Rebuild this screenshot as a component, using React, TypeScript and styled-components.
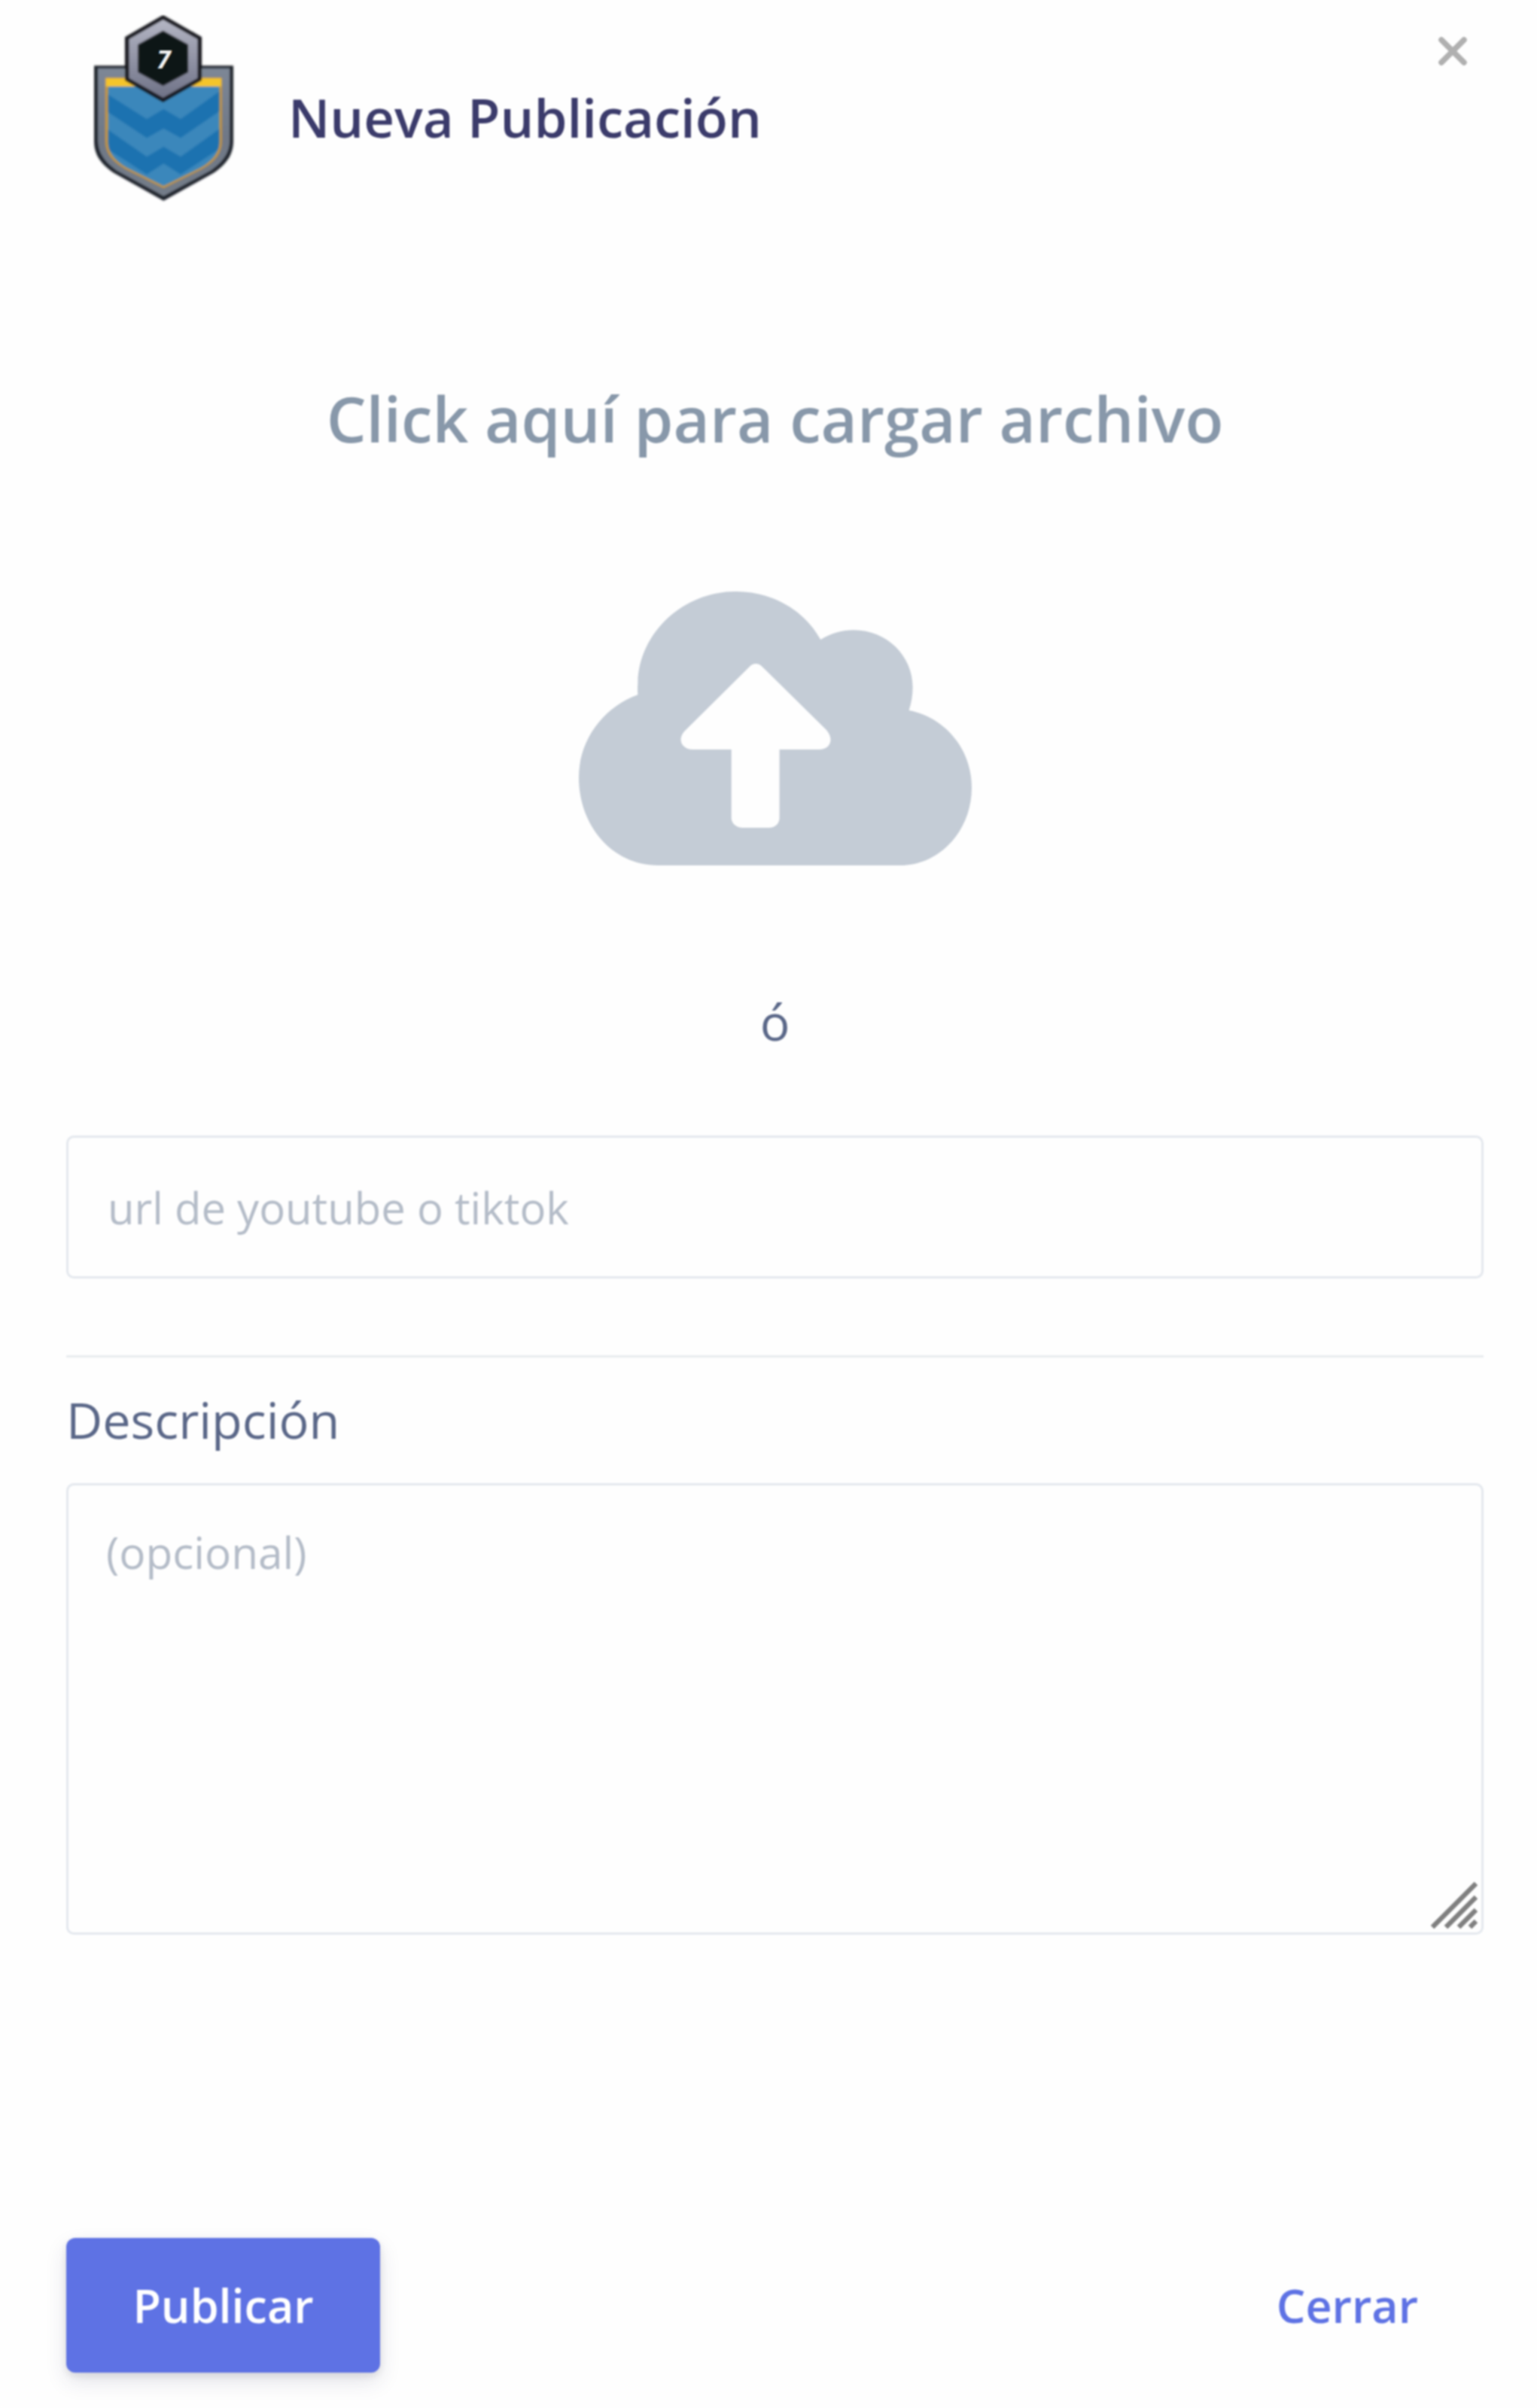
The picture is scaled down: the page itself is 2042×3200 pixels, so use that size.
import React from "react";
import styled, { createGlobalStyle } from "styled-components";

const Global = createGlobalStyle`
  html, body { margin: 0; padding: 0; background: #fefefe; }
  * { box-sizing: border-box; }
  body { font-family: "Open Sans", "Liberation Sans", sans-serif; }
`;

const Page = styled.div`
  width: 2042px;
  height: 3200px;
  display: flex;
  flex-direction: column;
  padding: 0 71px 47px 88px;
  background: #fefefe;
  filter: blur(0.9px);
`;

const Header = styled.header`
  display: flex;
  height: 270px;
  align-items: flex-start;
`;

const Logo = styled.svg`
  flex: none;
  width: 192px;
  height: 250px;
  margin: 20px 0 0 36px;
`;

const Title = styled.h5`
  margin: 120px 0 0 67px;
  flex: 1;
  font-size: 70.7px;
  line-height: 72px;
  font-weight: 600;
  color: #3b3b6b;
`;

const CloseButton = styled.button`
  flex: none;
  width: 40px;
  height: 40px;
  margin: 48px 21px 0 0;
  padding: 0;
  border: 0;
  background: none;
  color: #b0b0b0;
`;

const Upload = styled.section`
  display: flex;
  flex-direction: column;
  align-items: center;
`;

const UploadTitle = styled.h3`
  margin: 248px 0 0;
  font-size: 83.5px;
  line-height: 76px;
  font-weight: 600;
  color: #8898aa;
`;

const Cloud = styled.svg`
  display: block;
  width: 522px;
  height: 364px;
  margin-top: 192px;
`;

const Or = styled.p`
  margin: 172px 0 117px;
  font-size: 66px;
  line-height: 70px;
  color: #5a6788;
`;

const TextInput = styled.input`
  display: block;
  width: 100%;
  height: 190px;
  flex: none;
  padding: 0 52px;
  border: 3px solid #e4e8ee;
  border-radius: 10px;
  background: #fefefe;
  font: 400 58px "Open Sans", sans-serif;
  color: #525f7f;
  &::placeholder { color: #b4bcc8; opacity: 1; }
`;

const Divider = styled.hr`
  width: 100%;
  height: 3px;
  flex: none;
  margin: 102px 0 0;
  border: 0;
  background: #e9ecef;
`;

const Label = styled.label`
  display: block;
  margin-top: 52px;
  font-size: 66.5px;
  line-height: 60px;
  color: #5a6788;
`;

const AreaWrap = styled.div`
  position: relative;
  margin-top: 55px;
`;

const TextArea = styled.textarea`
  display: block;
  width: 100%;
  height: 600px;
  padding: 50px 50px;
  border: 3px solid #e4e8ee;
  border-radius: 10px;
  background: #fefefe;
  resize: none;
  font: 400 58.5px/1.3 "Open Sans", sans-serif;
  &::placeholder { color: #b4bcc8; opacity: 1; }
`;

const Grip = styled.svg`
  position: absolute;
  right: 8px;
  bottom: 8px;
  width: 62px;
  height: 62px;
  pointer-events: none;
`;

const Footer = styled.footer`
  display: flex;
  justify-content: space-between;
  align-items: center;
  margin-top: auto;
`;

const Primary = styled.button`
  width: 417px;
  height: 179px;
  border: 0;
  border-radius: 12px;
  background: #5e72e4;
  color: #fff;
  font: 600 61px "Open Sans", sans-serif;
  box-shadow: 0 12px 28px rgba(50, 50, 93, 0.13), 0 4px 12px rgba(0, 0, 0, 0.1);
`;

const Ghost = styled.button`
  margin-right: 87px;
  padding: 0;
  border: 0;
  background: none;
  color: #5e72e4;
  font: 600 61px "Open Sans", sans-serif;
`;

const Badge = () => (
  <Logo viewBox="135 60 570 750" aria-hidden="true">
    <defs>
      <linearGradient id="rim" x1="0" y1="0" x2="0" y2="1">
        <stop offset="0" stopColor="#7d8796" />
        <stop offset="0.55" stopColor="#6f7886" />
        <stop offset="1" stopColor="#747c89" />
      </linearGradient>
      <linearGradient id="ring" x1="0" y1="0" x2="0" y2="1">
        <stop offset="0" stopColor="#b4b6c4" />
        <stop offset="1" stopColor="#6f7287" />
      </linearGradient>
      <filter id="soft"><feGaussianBlur stdDeviation="2.5" /></filter>
      <clipPath id="field">
        <path d="M190 345H635V560C635 610 608 640 558 670L412 742L267 670C217 640 190 610 190 560Z" />
      </clipPath>
    </defs>
    <g filter="url(#soft)">
      <path d="M135 262H690V560C690 620 660 655 610 690L412 800L215 690C165 655 135 620 135 560Z" fill="#1b2029" />
      <path d="M150 272H676V558C676 612 646 648 600 680L412 782L225 680C179 648 150 612 150 558Z" fill="url(#rim)" />
      <path d="M180 310H644V560C644 615 613 645 563 675L412 750L262 675C212 645 180 615 180 560Z" fill="#c9962a" />
      <path d="M182 312H642V345H182Z" fill="#f5c52c" />
      <g clipPath="url(#field)">
        <rect x="180" y="340" width="465" height="420" fill="#3a87bb" />
        <path d="M180 370L345 475L412 435L480 475L640 360V440L480 550L412 512L345 550L180 440Z" fill="#1b72b0" />
        <path d="M180 510L345 625L412 585L480 625L640 510V590L480 695L412 652L345 695L260 640L180 590Z" fill="#1b72b0" />
      </g>
      <path d="M410 60L564 148V320L410 408L258 320V148Z" fill="#14161b" />
      <path d="M410 78L548 156V312L410 390L274 312V156Z" fill="url(#ring)" />
      <path d="M410 122L510 178V288L410 342L310 288V178Z" fill="#101216" />
    </g>
    <text x="412" y="272" textAnchor="middle" fontFamily="Open Sans, sans-serif" fontStyle="italic" fontWeight="700" fontSize="100" fill="#f2f2f2">7</text>
  </Logo>
);

export default function App() {
  return (
    <>
      <Global />
      <Page>
        <Header>
          <Badge />
          <Title>Nueva Publicación</Title>
          <CloseButton aria-label="Cerrar">
            <svg viewBox="0 0 40 40" width="40" height="40" aria-hidden="true">
              <path d="M5 5L35 35M35 5L5 35" stroke="currentColor" strokeWidth="7.5" strokeLinecap="round" />
            </svg>
          </CloseButton>
        </Header>
        <Upload>
          <UploadTitle>Click aquí para cargar archivo</UploadTitle>
          <Cloud viewBox="125 138 1365 1092" preserveAspectRatio="none" aria-hidden="true">
            <path
              fillRule="evenodd"
              fill="#c4ccd6"
              d="M400 1230C240 1230 125 1070 125 880C125 730 210 600 330 550C328 520 330 510 330 500C335 300 490 138 670 138C800 138 910 215 965 330C1000 305 1040 292 1080 292C1195 292 1285 395 1285 520C1285 552 1280 585 1272 612C1400 640 1490 770 1490 920C1490 1090 1380 1230 1240 1230ZM718 438L492 695C465 730 485 768 520 768H655V1040C655 1065 675 1080 695 1080H785C805 1080 822 1065 822 1040V768H960C995 768 1015 730 985 690L762 438C750 422 730 422 718 438Z"
            />
          </Cloud>
          <Or>ó</Or>
        </Upload>
        <TextInput placeholder="url de youtube o tiktok" />
        <Divider />
        <Label>Descripción</Label>
        <AreaWrap>
          <TextArea placeholder="(opcional)" />
          <Grip viewBox="0 0 62 62" aria-hidden="true">
            <path d="M2 60L60 2M20 60L60 20M37 60L60 37M52 60L60 52" stroke="#808080" strokeWidth="6.5" />
          </Grip>
        </AreaWrap>
        <Footer>
          <Primary>Publicar</Primary>
          <Ghost>Cerrar</Ghost>
        </Footer>
      </Page>
    </>
  );
}
